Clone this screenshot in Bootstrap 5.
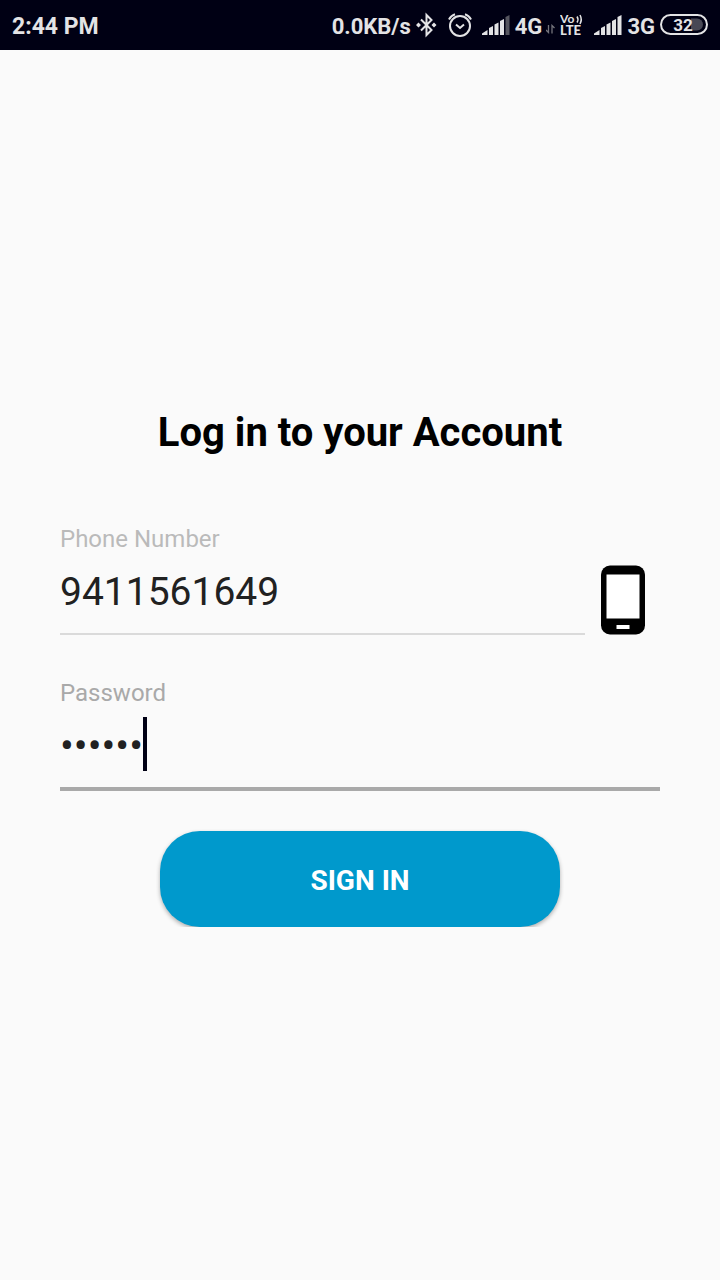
<!DOCTYPE html>
<html lang="en">
<head>
<meta charset="utf-8">
<meta name="viewport" content="width=device-width, initial-scale=1">
<title>Log in</title>
<link href="https://cdn.jsdelivr.net/npm/bootstrap@5.3.0/dist/css/bootstrap.min.css" rel="stylesheet">
<style>
  body { background: #fafafa; color: #000; font-family: Roboto, sans-serif; }
  .status-bar { height: 50px; padding: 0 12px; background: #000014; color: #e3e3e5; font-size: 22px; line-height: 26px; font-weight: 700; }
  .status-bar span { padding-top: 3px; }
  .status-bar .clock { font-size: 23px; }
  .status-bar svg { flex: none; display: block; }
  .gap-before-sm { margin-left: 5px; }
  .gap-before { margin-left: 10px; }
  .login-form { padding: 0 60px; }
  .login-title { font-size: 40px; line-height: 56px; font-weight: 700; padding-top: 2px; margin-bottom: 64px; }
  .field-label { display: block; font-size: 24px; line-height: 28px; margin-bottom: 4px; color: #bababa; }
  .field-label.active { color: #a9a9a9; }
  .line-input { font-size: 39px; line-height: 54px; height: auto; padding: 8px 0 14px; border: 0; border-bottom: 2px solid #dadada; border-radius: 0; background: transparent; color: #212121; }
  .line-input:focus { background: transparent; color: #212121; box-shadow: none; }
  .line-input.active, .line-input.active:focus { font-size: 41px; border-bottom: 4px solid #a9a9a9; }
  .password-field { margin-top: 44px; }
  .caret { left: 83px; top: 6px; width: 4px; height: 54px; background: #000014; }
  .phone-row { gap: 16px; padding-right: 15px; }
  .sign-in { width: 66.6667%; height: 96px; margin-top: 40px; padding: 10px 12px 6px; border: 0; border-radius: 40px; background: #0099cc; color: #fff; font-size: 28px; line-height: 32px; font-weight: 700; box-shadow: 0 2px 4px rgba(0,0,0,.3); clip-path: inset(-2px -4px 0 -4px); }
  .sign-in:hover { background: #008dbc; color: #fff; }
</style>
</head>
<body class="d-flex flex-column min-vh-100">
<header class="status-bar d-flex align-items-center justify-content-between">
  <span class="clock">2:44 PM</span>
  <div class="d-flex align-items-center">
    <span>0.0KB/s</span>
    <svg class="gap-before-sm" width="22" height="26" viewBox="0 0 22 26" fill="none" stroke="#e3e3e5" stroke-width="2" aria-hidden="true">
      <path d="M5 7.500 15.500 18 10.500 23V3l5 5L5 18.500"/>
      <path d="M0 13 2.500 10.500 5 13 2.500 15.500ZM15.500 13l2.500-2.500L20.500 13 18 15.500Z" fill="#e3e3e5" stroke="none"/>
    </svg>
    <svg class="gap-before" width="24" height="26" viewBox="0 0 24 26" fill="none" stroke="#e3e3e5" stroke-width="2" aria-hidden="true">
      <circle cx="12" cy="14" r="10"/>
      <path d="M1 7.500Q3 3.500 7 2.200M23 7.500Q21 3.500 17 2.200M8 12.500l4 3.500 4-3.500"/>
    </svg>
    <svg class="gap-before" width="28" height="22" viewBox="0 0 28 22" fill="#e3e3e5" aria-hidden="true">
      <path d="M0 21V19.500L5.500 16V21ZM7 14 11 12V21H7ZM12.500 10.500 16.500 8.500V21H12.500ZM18 7 22 5V21H18Z"/>
      <path d="M23.500 3 27.500 1V21H23.500Z" fill="#55555f"/>
    </svg>
    <span class="gap-before-sm">4G</span>
    <svg class="ms-1 mt-2" width="9" height="10" viewBox="0 0 9 10" fill="none" stroke="#74747c" aria-hidden="true">
      <path d="M2.500 1V8.500L0 6M6 9.500V1.500L8.500 4" stroke-width="1.300"/>
    </svg>
    <svg class="gap-before-sm" width="24" height="30" viewBox="0 0 24 30" fill="#e3e3e5" font-family="Lato, sans-serif" font-weight="700" role="img" aria-label="VoLTE">
      <text x="0" y="13" font-size="12">Vo</text>
      <text x="0" y="25" font-size="13" font-weight="900">LTE</text>
      <path d="M17 6.500Q19 9.500 17 12.500M20 5Q22.500 9.500 20 14" fill="none" stroke="#e3e3e5" stroke-width="1.500"/>
    </svg>
    <svg class="gap-before" width="28" height="22" viewBox="0 0 28 22" fill="#e3e3e5" aria-hidden="true">
      <path d="M0 21V19.500L5.500 16V21ZM7 14 11 12V21H7ZM12.500 10.500 16.500 8.500V21H12.500ZM18 7 22 5V21H18ZM23.500 3 27.500 1V21H23.500Z"/>
    </svg>
    <span class="gap-before-sm">3G</span>
    <svg class="gap-before-sm" width="48" height="22" viewBox="0 0 48 22" role="img" aria-label="Battery 32">
      <path d="M31 4.500h6a6 6 0 0 1 0 12h-6Z" fill="#484855"/>
      <rect x="1" y="1" width="46" height="19" rx="9.500" fill="none" stroke="#e3e3e5" stroke-width="2"/>
      <text x="23" y="17" text-anchor="middle" font-size="17" font-weight="700" fill="#e3e3e5">32</text>
    </svg>
  </div>
</header>
<main class="flex-grow-1 d-flex flex-column justify-content-center">
  <form class="login-form">
    <h1 class="login-title text-center">Log in to your Account</h1>
    <label class="field-label" for="phone">Phone Number</label>
    <div class="phone-row d-flex align-items-center">
      <input class="form-control line-input flex-grow-1" id="phone" type="tel" value="9411561649">
      <svg class="flex-shrink-0 mt-2" width="44" height="70" viewBox="0 0 44 70" aria-hidden="true">
        <rect width="44" height="69" y="0.500" rx="9"/>
        <path d="M5.500 9.500h33v44h-33ZM15.500 60h13v4h-13Z" fill="#fff"/>
      </svg>
    </div>
    <div class="password-field">
      <label class="field-label active" for="password">Password</label>
      <div class="position-relative">
        <input class="form-control line-input active" id="password" type="password" value="secret">
        <span class="caret position-absolute" aria-hidden="true"></span>
      </div>
    </div>
    <div class="text-center">
      <button class="btn sign-in" type="submit">SIGN IN</button>
    </div>
  </form>
</main>
<script src="https://cdn.jsdelivr.net/npm/bootstrap@5.3.0/dist/js/bootstrap.bundle.min.js"></script>
</body>
</html>
